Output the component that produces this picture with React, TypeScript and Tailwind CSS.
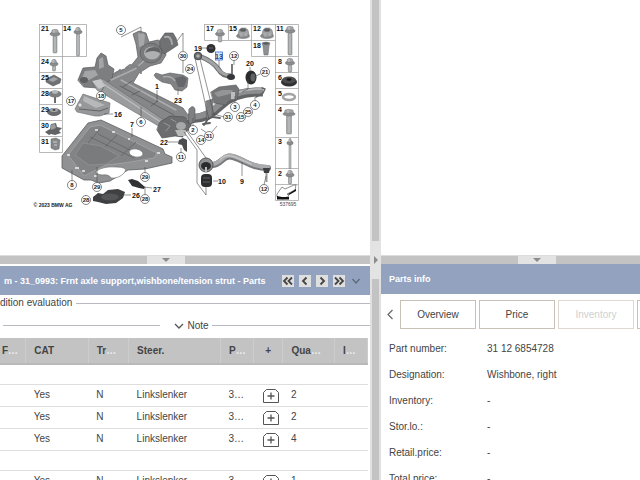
import React from "react";

const FONT = "font-['Liberation_Sans',Arial,sans-serif]";

type Point = [label: string, x: number, y: number];

const CALLOUTS: Point[] = [
  ["5", 121, 30], ["30", 183, 56], ["24", 190, 69], ["12", 234, 56], ["21", 265, 72],
  ["3", 235, 107], ["4", 255, 105], ["31", 228, 117], ["15", 241, 117], ["25", 248, 112],
  ["2", 193, 130], ["14", 201, 140], ["31", 209, 136], ["6", 141, 122], ["17", 71, 101],
  ["18", 101, 96], ["8", 72, 185], ["29", 97, 187], ["28", 86, 200], ["29", 145, 177],
  ["28", 145, 199], ["11", 181, 157], ["12", 264, 189],
];

const NUMBERS: Point[] = [
  ["21", 45, 28], ["14", 67, 28], ["24", 45, 61], ["25", 45, 77], ["28", 45, 93],
  ["29", 45, 109], ["30", 45, 125], ["31", 45, 141], ["17", 210, 28], ["15", 233, 28],
  ["12", 257, 28], ["11", 280, 28], ["18", 257, 45], ["8", 280, 61], ["6", 280, 77],
  ["5", 280, 93], ["4", 280, 109], ["3", 280, 141], ["2", 280, 173], ["19", 198, 48],
  ["20", 250, 63], ["23", 178, 100], ["1", 157, 86], ["16", 118, 114], ["7", 132, 124],
  ["22", 164, 142], ["9", 242, 181], ["10", 222, 181], ["26", 136, 195], ["27", 157, 189],
];

function Bolt({ x, y, h, w = 3 }: { x: number; y: number; h: number; w?: number }) {
  return (
    <g>
      <rect x={x - w / 2} y={y + 3} width={w} height={h} rx="1" fill="#a5a7a8" stroke="#77797a" strokeWidth=".5" />
      <path d={`M${x} ${y + 6}V${y + h + 2}`} stroke="#c9cbcc" strokeWidth=".8" />
      <ellipse cx={x} cy={y + 3} rx={w + 1.2} ry="1.9" fill="#8b8d8f" stroke="#6a6c6e" strokeWidth=".4" />
      <path d={`M${x - w + 0.4} ${y + 2}L${x - w + 1} ${y - 1}Q${x} ${y - 2.4} ${x + w - 1} ${y - 1}L${x + w - 0.4} ${y + 2}Z`} fill="#a2a4a5" stroke="#707274" strokeWidth=".4" />
      <path d={`M${x - 1} ${y - 1}v3`} stroke="#d3d5d6" strokeWidth=".8" />
    </g>
  );
}

function Nut({ x, y }: { x: number; y: number }) {
  return (
    <g stroke="#66686a" strokeWidth=".5">
      <ellipse cx={x} cy={y + 4} rx="6.5" ry="2.6" fill="#8b8d8f" />
      <path d={`M${x - 5} ${y + 3}l1-5 2.5-2h4l2.5 2 1 5-3 2h-5z`} fill="#a0a2a4" />
      <ellipse cx={x} cy={y - 2} rx="3" ry="1.5" fill="#5c5e60" />
      <path d={`M${x - 2} ${y + 1}v4M${x + 3} ${y + 1}v3`} stroke="#c8cacb" />
    </g>
  );
}

function PartsDiagram() {
  return (
    <svg viewBox="0 0 370 255" className="h-full w-full" role="img" aria-label="Frnt axle support, wishbone/tension strut">
      <g fill="none" stroke="#9b9b9b" strokeWidth=".7">
        <path d="M39 24.5H86.500V56.500H39.500V24M62.500 24V152.500H39.500V56M39 72.500H62M39 88.500H62M39 104.500H62M39 120.500H62M39 136.500H62" />
        <path d="M204.500 24.500H298.500V200.500H275.500V24M204.500 24V40.500H275M228.500 24V40M251.500 24V56.500H298M275 72.500H298M275 88.500H298M275 104.500H298M275 137.500H298M275 168.500H298M275 184.500H298" />
      </g>

      <Bolt x={55} y={31} h={19} w={4} />
      <Bolt x={78} y={29} h={24} w={3} />
      <Bolt x={54} y={61} h={7} w={3} />
      <path d="M46 79l8-4 7 4-1 4-7 3-7-4z" fill="#6f7173" stroke="#4b4d4f" strokeWidth=".5" />
      <path d="M48 80l6-3 4 2-5 3z" fill="#a1a3a4" />
      <ellipse cx="55" cy="94" rx="6.500" ry="3.500" fill="#7c7e80" />
      <ellipse cx="55" cy="92" rx="3" ry="1.800" fill="#b6b8b9" />
      <path d="M55 97v6" stroke="#6a6c6e" strokeWidth="2" />
      <ellipse cx="54" cy="112" rx="7" ry="4" fill="#696b6d" />
      <ellipse cx="54" cy="110" rx="4" ry="2" fill="#a4a6a7" />
      <ellipse cx="54" cy="110" rx="1.500" ry="1" fill="#45474a" />
      <path d="M45 132l5-3 1-5 5-1 1 4 5 1-3 3 2 2-6 2-4-1-2 1z" fill="#606264" />
      <path d="M50 125l5-1 1 4-5 2z" fill="#9a9c9d" />
      <path d="M51 139l5-1 4 2-1 9-4 1-4-2z" fill="#85878a" stroke="#5e6062" strokeWidth=".5" />
      <path d="M53 142h4M54 145h3" stroke="#d0d2d3" />

      <Bolt x={220} y={31} h={8} w={3.5} />
      <Nut x={243} y={32} />
      <Nut x={267} y={32} />
      <path d="M262 43q4-2 8 0l-1 3-1 9h-4l-1-9z" fill="#8e9092" stroke="#636567" strokeWidth=".5" />
      <ellipse cx="266" cy="43.500" rx="3" ry="1.200" fill="#5b5d5f" />
      <Bolt x={290} y={28} h={24} w={4} />
      <Bolt x={290} y={60} h={9} w={3.5} />
      <ellipse cx="289" cy="82" rx="8" ry="4.500" fill="#2f3133" />
      <ellipse cx="289" cy="80" rx="7" ry="3.500" fill="#4b4d4f" />
      <ellipse cx="289" cy="79.500" rx="2.500" ry="1.200" fill="#161718" />
      <ellipse cx="289" cy="97" rx="6" ry="3" fill="none" stroke="#a2a4a5" strokeWidth="2.500" />
      <Bolt x={289} y={111} h={20} w={5} />
      <Bolt x={290} y={140} h={26} w={2} />
      <Bolt x={290} y={172} h={9} w={3} />
      <path d="M277 194l5-7 3 2 9-4h2l-1 5-8 4 2 2-6 3-6-2z" fill="#fff" stroke="#444" strokeWidth=".6" />
      <path d="M277 196l5 1h7v2.500h-12zM288 194l8-5v2l-7 4z" fill="#111" />

      {/* front axle support */}
      <g strokeLinejoin="round" strokeLinecap="round">
        <path d="M104 80L116 72 130 67 138 57 136 44 133 34 139 31 146 33 149 42 158 40 164 44 166 55 161 63 150 66 139 73 133 83 183 108 190 118 184 132 170 135 160 126 106 91z" fill="#858789" stroke="#5a5c5e" strokeWidth=".7" />
        <path d="M78 80l5-12 12-1 2-9 4-5 5 3 2 9 6 4-2 10-14 9-14-1z" fill="#7c7e80" stroke="#58595b" strokeWidth=".7" />
        <path d="M85 71l10-1 3 5-9 5-7-2zM99 59l4-2 1 10-5 2z" fill="#a3a5a6" />
        <ellipse cx="84" cy="80" rx="4" ry="3" fill="#5d5f62" />
        <path d="M92 81l11-2 64 43-5 6-65-38z" fill="#9a9c9e" stroke="#66686a" strokeWidth=".6" />
        <path d="M92 81l9-2 4 7-6 3z" fill="#c4c6c7" />
        <path d="M102 83l63 42" stroke="#bcbebf" strokeWidth="1.200" />
        <path d="M121 80l55 30M111 80l24-11 11-10" fill="none" stroke="#aaacad" strokeWidth="1.500" />
        <path d="M120 86l54 29M132 81l-9 6M140 91l-8 4M158 101l-7 5" stroke="#595b5d" strokeWidth=".8" />
        <path d="M126 68l4-3 8 2 3 6M115 75l5-5 1 3" fill="none" stroke="#808284" strokeWidth="2" />
        <ellipse cx="151" cy="53" rx="11" ry="10" fill="#797b7d" stroke="#58595b" strokeWidth=".6" />
        <ellipse cx="152" cy="53" rx="8" ry="6.500" fill="#aeb0b1" />
        <path d="M145 53q2-6 9-6t6 6q-7-4-15 0z" fill="#626466" />
        <path d="M138 34l3-2 4 3-1 10-5 2z" fill="#a5a7a8" />
        <path d="M160 40l5-7 8 0 3 5 2 7-6 4-3 2-5 3-4-7z" fill="#6f7173" stroke="#4f5153" strokeWidth=".6" />
        <path d="M165 37q6-2 7 7" fill="none" stroke="#a7a9aa" strokeWidth="2" />
        <path d="M160 122l10-6 14 1 8 5-3 8-7 3 1 4-8-1-13 2-5-8z" fill="#6b6d6f" stroke="#4f5153" strokeWidth=".7" />
        <ellipse cx="181" cy="126" rx="5" ry="4" fill="#a5a7a8" />
        <path d="M175 130h11v6h-8z" fill="#b8baba" />
        <path d="M164 123l6 3-4 5M171 119l5 3" fill="none" stroke="#96989a" strokeWidth="1" />
        <path d="M187 118Q205 121 220 106T263 92" fill="none" stroke="#626466" strokeWidth="9" strokeLinecap="butt" />
        <path d="M187 117Q205 119 220 104T263 91" fill="none" stroke="#8b8d8f" strokeWidth="6" strokeLinecap="butt" />
        <path d="M220 102Q237 88 263 89" fill="none" stroke="#b9bbbc" strokeWidth="1.500" />
        <path d="M211 92l8-5 17-2 3 4-2 11-8 1-3 4-12-2z" fill="#747678" stroke="#525456" strokeWidth=".6" />
        <path d="M214 93l8-3 11 0-3 4-12 3z" fill="#939596" />
        <path d="M189 109q4-5 6 0v13l-6 2z" fill="#7e8082" stroke="#55575a" strokeWidth=".6" />
        <path d="M206 101l7-2-1 17-5 4z" fill="#7e8082" stroke="#55575a" strokeWidth=".5" />
        <path d="M231 92h4v7h-4z" fill="#bcbebf" />
        <path d="M204 125l4-6 5-2 7 1M203 124l7-1" fill="none" stroke="#5d5f61" strokeWidth="1.800" />
        <path d="M256 97l7-4 2-4-3-1" fill="none" stroke="#626466" strokeWidth="1.500" />
      </g>

      <path d="M154 75l2-2 6 2 8-2 13 2 5 3-1 9-5 4-7-1-4-6-9-2-6-4z" fill="#808284" stroke="#5b5d5f" strokeWidth=".6" />
      <path d="M175 78l8-2 4 3-3 8-6 0z" fill="#65676a" />
      <path d="M163 77q8-2 12 4" fill="none" stroke="#a9abac" strokeWidth="1.500" />

      <path d="M75 109l3-6 5-9 27 9-1 10-9 3-5 0-18-4z" fill="#96989a" stroke="#6b6d6f" strokeWidth=".6" />
      <path d="M84 96l21 9-9 3-13-7z" fill="#b6b8b9" />
      <path d="M79 109l21 2 8-3" fill="none" stroke="#626466" />
      <circle cx="80" cy="105" r="2" fill="#e2e3e4" stroke="#777" strokeWidth=".5" />

      {/* stiffening plate */}
      <path d="M62 156l26-33 13-3 62 29 2 5 7 3 0 6-27 6-17 1-18 11-11 2-8-3-7 0-22-12z" fill="#8f9193" stroke="#5b5d5f" strokeWidth=".8" strokeLinejoin="round" />
      <path d="M68 155l22-28 10-2 57 28-3 5-30 5-18 2-22 11z" fill="#818385" stroke="#a5a7a8" strokeWidth=".8" />
      <path d="M75 155l8-12 18 3 18 10-13 8-17 1z" fill="#797b7d" stroke="#9c9ea0" strokeWidth=".5" />
      <path d="M90 137l44 21M100 129l-12 14M117 135l-12 12M121 156l15-14M98 134l44 22" stroke="#626466" strokeWidth=".8" />
      <path d="M96 171q8-5 20-4 12 0 9 5-6 7-14 6-2-4-9-3-7-1-6-4z" fill="#fff" stroke="#626466" strokeWidth=".6" />
      <ellipse cx="136" cy="153" rx="7" ry="4" transform="rotate(10 136 153)" fill="#fff" stroke="#626466" strokeWidth=".6" />
      <path d="M67 155h3M75 168h4M82 171h3M95 130h3M112 132h3M128 139h2M157 153h3M145 161h3M94 176h3" stroke="#eee" strokeWidth="1.500" />

      <path d="M93 197l5-4 5 1 5-4 10-1 7 3-2 6-7 5-10 1-8-2-5-1z" fill="#3e4042" />
      <ellipse cx="110" cy="197" rx="9" ry="3.500" fill="#535557" />
      <path d="M128 180l4-1 6 2 7 6-1 2-5-1-7-2z" fill="#303234" />

      <g fill="none" strokeLinecap="round" strokeLinejoin="round">
        <path d="M211 165C222 166 222 154 233 157S251 168 268 168" stroke="#77797b" strokeWidth="6" />
        <path d="M211 164C222 165 222 153 233 156S251 167 268 167" stroke="#a9abac" strokeWidth="4" />
        <path d="M220 160Q225 153 235 157L251 164" stroke="#c9cacc" strokeWidth="1.200" />
        <path d="M199 56C210 60 215 64 219 70Q222 76 231 76" stroke="#6b6d6f" strokeWidth="5" />
        <path d="M199 56C210 60 215 64 219 70Q222 75 231 75" stroke="#a0a2a3" strokeWidth="3.200" />
      </g>
      <circle cx="206" cy="165" r="7" fill="#8e9092" stroke="#515355" />
      <ellipse cx="206" cy="166" rx="5" ry="4" fill="#292b2d" />
      <path d="M206 167v6" stroke="#b9bbbc" strokeWidth="2" />
      <rect x="201" y="174" width="11" height="13" rx="4" fill="#2c2e30" />
      <path d="M203 178h7M203 182h7" stroke="#606264" />
      <path d="M263 168h7l-1 5h-5z" fill="#3d3f41" />
      <path d="M266.500 173v9" stroke="#999" strokeWidth="2" />
      <circle cx="198" cy="56" r="3.800" fill="#67696b" stroke="#47494b" />
      <circle cx="198" cy="56" r="1.800" fill="#a9abac" />
      <ellipse cx="231" cy="77" rx="4" ry="3" fill="#35373a" />
      <path d="M232 64v10" stroke="#77797b" strokeWidth="2" />
      <circle cx="211" cy="48.500" r="4.500" fill="#2f3133" />
      <path d="M209 48h4" stroke="#66686a" />
      <ellipse cx="251" cy="77.500" rx="5.500" ry="7" fill="#292b2d" />
      <ellipse cx="253" cy="77.500" rx="2.500" ry="4" fill="#606264" />
      <path d="M179 140l4-2 4 2v12l-3-2-2-5-4-1z" fill="#4b4d4f" />

      <g fill="none" stroke="#4a4a4a" strokeWidth=".6">
        <path d="M121 37l20-10v7M183 33v18M183 33l-6 8M183 60v13M157 90v12M113 114h-9M132 128v9M141 118V107M168 142h11M181 148v5M218 181h-5M242 176v-14M202 48h5M219 60v7M234 60v5M250 67v5M260 74l-6 3M178 95v-6M248 79v10l-6 3M235 103v-7M255 101v-4M101 92l3-5M72 181v-11M97 183v-16M131 195h-7M152 188l-8-1M145 173v-6M145 195v-8M90 200l-5-5M264 185l2-9M186 130l20 28M184 132l13 18v33l9 12v-8M195 58l14 62M200 59l14 56M201 129l9 6M211 133l6-7M193 126v-8M224 117l-10-3" />
      </g>

      <g className="font-['Liberation_Sans',Arial,sans-serif] font-bold" textAnchor="middle">
        {CALLOUTS.map(([label, x, y], i) => (
          <g key={i}>
            <circle cx={x} cy={y} r="4.500" fill="#fff" stroke="#333" strokeWidth=".6" />
            <text x={x} y={y + 2} fontSize="6" fill="#222">{label}</text>
          </g>
        ))}
        {NUMBERS.map(([label, x, y], i) => (
          <text key={i} x={x} y={y + 2.5} fontSize="7" fill="#111">{label}</text>
        ))}
        <rect x="215.500" y="52" width="7" height="8" fill="#d9e6fa" stroke="#2f6fd0" strokeWidth=".8" />
        <text x="219" y="58.500" fontSize="7" fill="#17407f">13</text>
        <text x="53" y="206.500" fontSize="5" fill="#222">© 2023 BMW AG</text>
        <text x="288" y="206" fontSize="5" fontWeight="400" fill="#444">537695</text>
      </g>
    </svg>
  );
}

function HandleBar({ before, after }: { before: string; after: string }) {
  return (
    <div className="flex h-[9px] shrink-0 border-t border-[#dcdcdc] bg-[#c3c3c3]">
      <div className={before} />
      <button type="button" aria-label="Collapse pane" className="flex w-[38px] items-center justify-center bg-[#e3e3e3]">
        <svg className="h-1 w-2" viewBox="0 0 8 4"><path d="M0 0h8L4 4z" fill="#8c8c8c" /></svg>
      </button>
      <div className={after} />
    </div>
  );
}

const NAV = [
  { label: "First", d: "M5.500 2.500L2 6l3.500 3.500M10 2.500L6.500 6 10 9.500" },
  { label: "Previous", d: "M7.500 2.500L4 6l3.500 3.500" },
  { label: "Next", d: "M4.500 2.500L8 6 4.500 9.500" },
  { label: "Last", d: "M2 2.500L5.500 6 2 9.500M6.500 2.500L10 6 6.500 9.500" },
];

const COLUMNS = [
  { text: "F", cut: true }, { text: "CAT" }, { text: "Tr", cut: true }, { text: "Steer." },
  { text: "P", cut: true }, { text: "+" }, { text: "Qua", cut: true }, { text: "I", cut: true },
];

const ROWS = [null, "2", "2", "4", null, "1"];

function PartsTable() {
  return (
    <table className="w-full table-fixed border-collapse text-left">
      <colgroup>
        <col className="w-[7%]" /><col className="w-[17%]" /><col className="w-[11%]" /><col className="w-[25%]" />
        <col className="w-[9%]" /><col className="w-[8%]" /><col className="w-[14%]" /><col className="w-[9%]" />
      </colgroup>
      <thead>
        <tr className="h-[26px] border-b-2 border-[#b9b9b9] bg-[#c3c3c3]">
          {COLUMNS.map((c, i) => (
            <th key={i} className="border-r border-[#cdcdcd] pl-2 whitespace-nowrap text-[#444] first:pl-0.5 nth-6:px-0 nth-6:text-center">
              {c.text}{c.cut && <span className="text-[#eee]">…</span>}
            </th>
          ))}
        </tr>
      </thead>
      <tbody>
        {ROWS.map((qty, i) =>
          qty === null ? (
            <tr key={i} className="h-5 border-b border-[#dedede]"><td colSpan={8} /></tr>
          ) : (
            <tr key={i} className="h-[22px] border-b border-[#dedede]">
              <td />
              <td className="pl-2">Yes</td>
              <td className="pl-2">N</td>
              <td className="pl-2">Linkslenker</td>
              <td className="pl-2">3…</td>
              <td>
                <button type="button" aria-label="Add part" className="ml-auto mr-1 block pt-0.5">
                  <svg className="h-[14px] w-4" viewBox="0 0 16 14" fill="none" stroke="#555">
                    <path d="M.5 13.500V3.500L3.500.5h9l3 3v10z" />
                    <path d="M8 3.500v7M4.500 7h7" strokeWidth="1.300" />
                  </svg>
                </button>
              </td>
              <td className="pl-2">{qty}</td>
              <td />
            </tr>
          ),
        )}
      </tbody>
    </table>
  );
}

const DETAILS = [
  ["Part number:", "31 12 6854728"], ["Designation:", "Wishbone, right"], ["Inventory:", "-"],
  ["Stor.lo.:", "-"], ["Retail.price:", "-"], ["Total price:", "-"],
];

export default function App() {
  return (
    <div className={`grid h-screen grid-cols-[370fr_11px_259fr] overflow-hidden bg-white text-[10px] leading-3 text-[#444] ${FONT}`}>
      <div className="grid min-w-0 grid-cols-1 grid-rows-[255fr_225fr] overflow-hidden">
        <div className="min-h-0"><PartsDiagram /></div>
        <section className="flex min-h-0 min-w-0 flex-col">
          <HandleBar before="flex-[147]" after="flex-[185]" />
          <header className="mt-0.5 flex h-[29px] shrink-0 items-center bg-[#92a2bf] pl-1 whitespace-nowrap text-white">
            <h2 className="text-[9px] font-bold">m - 31_0993: Frnt axle support,wishbone/tension strut - Parts</h2>
            <div className="ml-auto flex items-center gap-[5px] pr-2">
              {NAV.map((n) => (
                <button key={n.label} type="button" aria-label={n.label} className="bg-[#dfdfdf]">
                  <svg className="h-3 w-3" viewBox="0 0 12 12" fill="none" stroke="#444" strokeWidth="1.800"><path d={n.d} /></svg>
                </button>
              ))}
              <button type="button" aria-label="Expand">
                <svg className="h-3 w-3" viewBox="0 0 12 12" fill="none" stroke="#596c7c" strokeWidth="1.300"><path d="M2.500 4L6 8l3.500-4" /></svg>
              </button>
            </div>
          </header>
          <div className="flex h-4 shrink-0 items-center gap-1">
            <span>dition evaluation</span><hr className="flex-1 border-[#b9b9c2]" />
          </div>
          <div className="flex h-[27px] shrink-0 items-center pt-0.5 pl-[3px]">
            <hr className="flex-[158] border-[#b9b9c2]" />
            <button type="button" className="mr-[3px] ml-[14px] flex items-center gap-[3px]">
              <svg className="h-[10px] w-[10px]" viewBox="0 0 10 10" fill="none" stroke="#555" strokeWidth="1.300"><path d="M1 3l4 4 4-4" /></svg>
              Note
            </button>
            <hr className="flex-[159] border-[#b9b9c2]" />
          </div>
          <div className="min-h-0 overflow-hidden pr-0.5"><PartsTable /></div>
        </section>
      </div>

      <div className="flex flex-col">
        <div className="flex-[241] border-x-2 border-[#e0e0e0] bg-[#c3c3c3]" />
        <button type="button" aria-label="Collapse side pane" className="flex h-[38px] items-center justify-center bg-[#e3e3e3]">
          <svg className="h-2 w-1" viewBox="0 0 4 8"><path d="M0 0v8L4 4z" fill="#8c8c8c" /></svg>
        </button>
        <div className="flex-[201] border-x-2 border-[#e0e0e0] bg-[#c3c3c3]" />
      </div>

      <div className="grid min-w-0 grid-cols-1 grid-rows-[255fr_225fr] overflow-hidden">
        <div className="min-h-0" />
        <section className="flex min-h-0 min-w-0 flex-col">
          <HandleBar before="flex-[137]" after="flex-[84]" />
          <header className="flex h-[30px] shrink-0 items-center bg-[#92a2bf] px-2 text-white">
            <h2 className="text-[9px] font-bold">Parts info</h2>
          </header>
          <nav className="mt-1.5 flex h-[29px] shrink-0 items-center overflow-hidden pl-1">
            <button type="button" aria-label="Scroll tabs left" className="mr-1 shrink-0">
              <svg className="h-[11px] w-[11px]" viewBox="0 0 11 11" fill="none" stroke="#666" strokeWidth="1.200"><path d="M7.500 1L3 5.500 7.500 10" /></svg>
            </button>
            <div className="flex h-full shrink-0 gap-[3px]">
              <button type="button" className="w-[76px] border border-[#c9c1b5]">Overview</button>
              <button type="button" className="w-[76px] border border-[#c9c1b5]">Price</button>
              <button type="button" disabled className="w-[76px] border border-[#ddd8d2] text-[#d0d0d0]">Inventory</button>
              <button type="button" aria-label="More" className="w-[76px] border border-[#c9c1b5]" />
            </div>
          </nav>
          <dl className="mt-[7px] grid shrink-0 auto-rows-[26px] grid-cols-[98fr_153fr] items-center pl-2">
            {DETAILS.map(([label, value]) => (
              <React.Fragment key={label}>
                <dt>{label}</dt>
                <dd>{value}</dd>
              </React.Fragment>
            ))}
          </dl>
        </section>
      </div>
    </div>
  );
}
